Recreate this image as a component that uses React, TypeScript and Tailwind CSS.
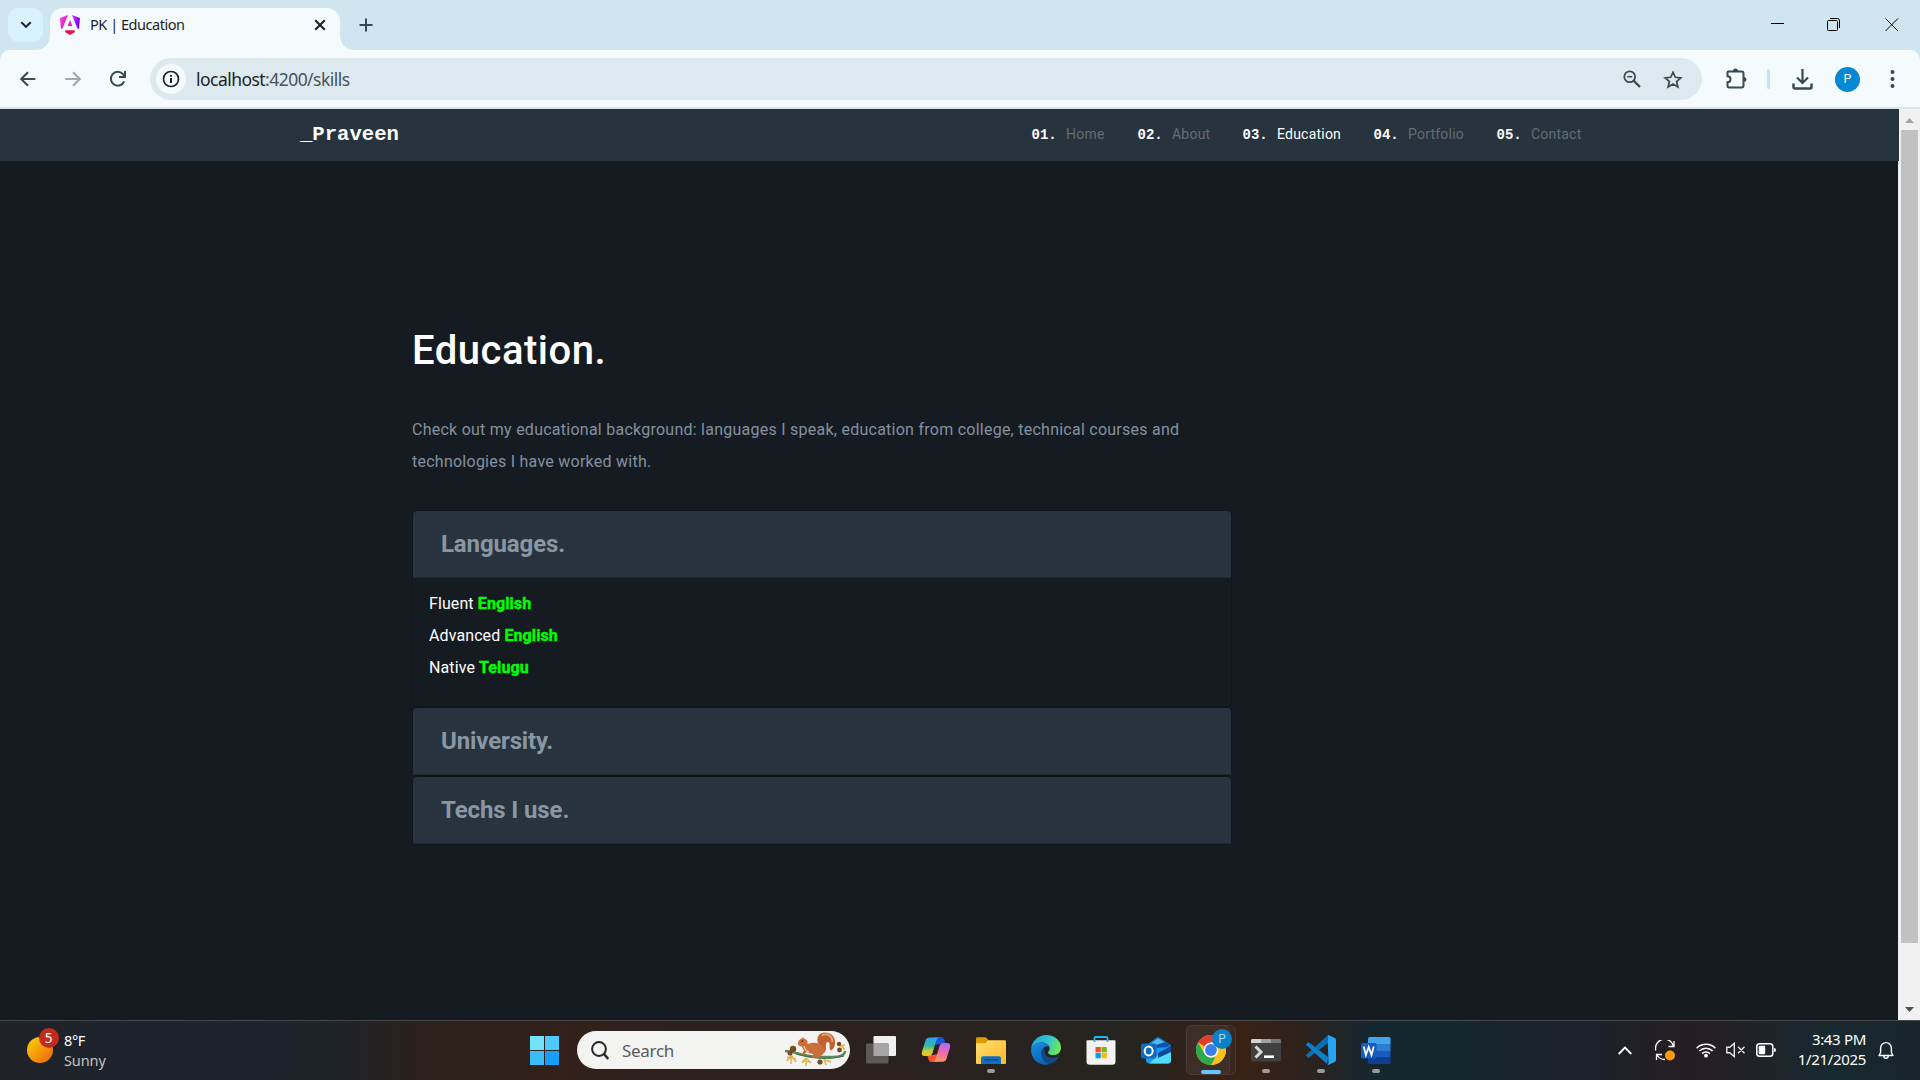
import React from "react";

const ui = "font-['Noto_Sans','Open_Sans',sans-serif]";

function AngularLogo() {
  return (
    <svg width="20" height="20" viewBox="0 0 20 20">
      <defs>
        <linearGradient id="ngA" x1="0" y1="0" x2="1" y2="1">
          <stop offset="0" stopColor="#ff41f8" />
          <stop offset="1" stopColor="#e4118f" />
        </linearGradient>
        <linearGradient id="ngB" x1="0" y1="0" x2="1" y2="1">
          <stop offset="0" stopColor="#f637e3" />
          <stop offset="0.5" stopColor="#8514f5" />
          <stop offset="1" stopColor="#7702ff" />
        </linearGradient>
      </defs>
      <path d="M0 2.9 8 0 2.6 13.2 1 14z" fill="url(#ngA)" />
      <path d="M12 0l8 2.9-1 11.1-1.6-.8z" fill="url(#ngB)" />
      <path d="M10 5l2.3 6H7.7z" fill="#ee1a9a" />
      <path d="M5.6 15.2h8.8l.6 1.8-5 3-5-3z" fill="#f0104a" />
    </svg>
  );
}

function TabStrip() {
  return (
    <div className="flex h-[50px] items-end bg-[#cfe6f0]">
      <div className="mb-2 ml-2 flex h-[34px] w-[35px] items-center justify-center rounded-[11px] bg-[#d8f2fd]">
        <svg width="12" height="8" viewBox="0 0 12 8" fill="none" stroke="#1c2327" strokeWidth="2.1">
          <path d="M1.3 1.3 6 5.9l4.7-4.6" />
        </svg>
      </div>
      <svg className="ml-[-8px]" width="15" height="15" viewBox="0 0 15 15">
        <path d="M15 0v15H0C9 15 15 9 15 0z" fill="#f5fafd" />
      </svg>
      <div className="flex h-[42px] w-[290px] items-center rounded-t-[13px] bg-[#f5fafd] pb-[8px] pl-[10px]">
        <AngularLogo />
        <span className={`${ui} ml-[10px] w-[216px] text-[14.5px] tracking-[-0.46px] text-[#1c2327]`}>PK | Education</span>
        <svg className="ml-[8px]" width="12" height="12" viewBox="0 0 12 12" stroke="#1c2327" strokeWidth="2.1">
          <path d="M1.2 1.2l9.6 9.6M10.800 1.200l-9.600 9.600" />
        </svg>
      </div>
      <svg width="15" height="15" viewBox="0 0 15 15">
        <path d="M0 0v15h15C6 15 0 9 0 0z" fill="#f5fafd" />
      </svg>
      <svg className="mb-[18px] ml-1" width="14" height="14" viewBox="0 0 14 14" stroke="#344b55" strokeWidth="2">
        <path d="M7 .5v13M.5 7h13" />
      </svg>
      <div className="mb-[18px] ml-auto flex items-center">
        <svg width="13" height="14" viewBox="0 0 13 14" stroke="#000" strokeWidth="1">
          <path d="M0 5.500h13" />
        </svg>
        <svg className="ml-[43px]" width="14" height="14" viewBox="0 0 14 14" fill="none" stroke="#000">
          <rect x=".5" y="2.500" width="10" height="10" rx="1" />
          <path d="M3 .5h7.500a2 2 0 0 1 2 2V10" />
        </svg>
        <svg className="ml-[44px] mr-[21px]" width="14" height="14" viewBox="0 0 14 14" stroke="#000" strokeWidth="1">
          <path d="M.5.500l12.500 12.500M13 .5.500 13" />
        </svg>
      </div>
    </div>
  );
}

function Toolbar() {
  return (
    <div className="bg-[#cfe6f0]">
      <div className="flex h-[59px] items-start rounded-t-[10px] border-b-2 border-[#dae5e9] bg-[#f5fafd] pt-2">
        <div className="flex h-[42px] w-[150px] items-center pl-5">
          <svg width="16" height="16" viewBox="0 0 16 16" fill="none" stroke="#344b55" strokeWidth="2">
            <path d="M15.300 8H1.800M8 1.200 1.200 8 8 14.800" />
          </svg>
          <svg className="ml-[29px]" width="16" height="16" viewBox="0 0 16 16" fill="none" stroke="#9fa8ad" strokeWidth="2">
            <path d="M.3 8h13.900M8 1.200 14.800 8 8 14.800" />
          </svg>
          <svg className="ml-[28px]" width="18" height="18" viewBox="0 0 18 18" fill="none" stroke="#344b55" strokeWidth="2">
            <path d="M15.200 11.300A6.900 6.900 0 1 1 13.900 4.100L15.500 6" />
            <path d="M16 1v6h-6" />
          </svg>
        </div>
        <div className="flex h-[42px] w-[1552px] items-center rounded-full bg-[#dceaef] pl-[6px]">
          <div className="flex size-[30px] items-center justify-center rounded-full bg-[#f5fafd]">
            <svg width="18" height="18" viewBox="0 0 18 18" fill="none" stroke="#1c2327" strokeWidth="1.700">
              <circle cx="9" cy="9" r="7.500" />
              <path d="M9 8v5M9 5v1.800" strokeWidth="2" />
            </svg>
          </div>
          <span className={`${ui} ml-[10px] text-[17.500px] tracking-[-0.540px] text-[#1c2327]`}>
            localhost<span className="text-[#4a5257]">:4200/skills</span>
          </span>
          <svg className="ml-auto" width="18" height="18" viewBox="0 0 18 18" fill="none" stroke="#41484c" strokeWidth="1.800">
            <circle cx="6.700" cy="6.700" r="5.400" />
            <path d="M10.600 10.600 17 17" strokeWidth="2.200" />
            <path d="M4.200 6.700h5" strokeWidth="1.500" />
          </svg>
          <svg className="ml-[22px] mr-[19px]" width="20" height="19" viewBox="0 0 20 19" fill="none" stroke="#41484c" strokeWidth="1.700">
            <path d="M10 2.200l2.300 5.100 5.500.5-4.200 3.700 1.300 5.500-4.900-2.900-4.900 2.900 1.300-5.500L2.200 7.800l5.500-.5z" />
          </svg>
        </div>
        <div className="flex h-[42px] flex-1 items-center pl-6">
          <svg width="21" height="22" viewBox="0 0 21 22">
            <path d="M2.500 3.500h13.300q1.700 0 1.700 1.700v12.600q0 1.700-1.700 1.700H3.200q-1.700 0-1.700-1.700v-3.600c4 0 4-6 0-6V4.500q0-1 1-1z" fill="none" stroke="#344b55" strokeWidth="2" />
            <path d="M7 3a2.500 2.500 0 0 1 5 0zM18 9a2.500 2.500 0 0 1 0 5z" fill="#344b55" />
          </svg>
          <div className="ml-[20px] h-5 w-[3px] rounded bg-[#b6eaff]" />
          <svg className="ml-[22px]" width="21" height="21" viewBox="0 0 21 21" fill="none" stroke="#344b55" strokeWidth="2.200">
            <path d="M10.500 0v13M5 8.500l5.500 5.500L16 8.500" />
            <path d="M1.500 14.500v3.500q0 1.500 1.500 1.500h15q1.500 0 1.500-1.500v-3.500" strokeWidth="2.500" />
          </svg>
          <div className="ml-[22px] flex size-[25px] items-center justify-center rounded-full bg-[#0488d1] font-[Roboto] text-[12.500px] text-white">P</div>
          <svg className="ml-[30px]" width="5" height="18" viewBox="0 0 5 18" fill="#344b55">
            <circle cx="2.500" cy="2" r="2" />
            <circle cx="2.500" cy="9" r="2" />
            <circle cx="2.500" cy="16" r="2" />
          </svg>
        </div>
      </div>
    </div>
  );
}

function NavLink({ n, label, cls, active }: { n: string; label: string; cls: string; active?: boolean }) {
  return (
    <div className={`flex items-baseline ${cls}`}>
      <span className="w-[35px] pl-[0.500px] font-['Liberation_Mono',monospace] text-[14px] font-bold text-white">{n}</span>
      <span className={active ? "text-[14px] tracking-[0.220px] text-white" : "text-[14px] tracking-[0.220px] text-[#626c75]"}>{label}</span>
    </div>
  );
}

function Card({ title, children }: { title: string; children?: React.ReactNode }) {
  return (
    <div className="rounded-[5px] border border-[#11161a]">
      <div className="flex h-[67px] items-center rounded-t-[4px] border-b border-[#1f2931] bg-[#27333e] pl-[28px] text-[24px] font-bold tracking-[-0.120px] text-[#8a97a3]">
        {title}
      </div>
      {children}
    </div>
  );
}

function Lang({ level, name }: { level: string; name: string }) {
  return (
    <p className="text-base leading-8 tracking-[0.100px] text-white">
      {level} <b className="tracking-[0.100px] text-[#00ff00] [-webkit-text-stroke:0.400px_#00ff00]">{name}</b>
    </p>
  );
}

function Page() {
  return (
    <div className="flex h-[911px] bg-[#f1f1f1] font-[Roboto,sans-serif]">
      <div className="w-[1899px]">
        <nav className="flex h-[52px] items-center bg-[#27333e] pl-[300px]">
          <span className="w-[731px] pt-px font-['Liberation_Mono',monospace] text-[20.600px] font-bold text-white">_Praveen</span>
          <NavLink n="01." label="Home" cls="w-[106px]" />
          <NavLink n="02." label="About" cls="w-[105px]" />
          <NavLink n="03." label="Education" cls="w-[131px]" active />
          <NavLink n="04." label="Portfolio" cls="w-[123px]" />
          <NavLink n="05." label="Contact" cls="w-[90px]" />
        </nav>
        <main className="mr-px h-[859px] bg-[#161b22] pl-[412px] pt-[166px]">
          <h1 className="text-[40px] font-medium leading-[48px] tracking-[0.500px] text-white">Education.</h1>
          <p className="mt-[39px] w-[820px] text-base leading-8 tracking-[0.250px] text-[#8391a0]">
            Check out my educational background: languages I speak, education from college, technical courses and
            <br />
            technologies I have worked with.
          </p>
          <div className="mt-[32px] flex w-[820px] flex-col">
            <Card title="Languages.">
              <div className="h-[128px] pl-4 pt-[10px]">
                <Lang level="Fluent" name="English" />
                <Lang level="Advanced" name="English" />
                <Lang level="Native" name="Telugu" />
              </div>
            </Card>
            <Card title="University." />
            <Card title="Techs I use." />
          </div>
        </main>
      </div>
      <div className="flex w-[21px] flex-col items-center">
        <svg className="mt-[9px]" width="9" height="5" viewBox="0 0 9 5" fill="#a3a3a3">
          <path d="M4.500 0 9 5H0z" />
        </svg>
        <div className="mt-[7px] h-[813px] w-[17px] bg-[#c1c1c1]" />
        <svg className="mt-[64px]" width="9" height="5" viewBox="0 0 9 5" fill="#505050">
          <path d="M0 0h9L4.500 5z" />
        </svg>
      </div>
    </div>
  );
}

function Squirrel() {
  return (
    <svg width="64" height="36" viewBox="0 0 64 36">
      <path d="M1 19c10 0 18 6 34 6 14 0 26 1 26-6" fill="none" stroke="#5d8a5b" strokeWidth="2.500" />
      <path d="M12 22c18 5 34 6 48 2" fill="none" stroke="#3f6d47" strokeWidth="1" />
      <g fill="none" stroke="#dfb44a" strokeWidth="1.500">
        <path d="M7 23l-4 6M7 23v9M7 23l5 7M3 25l9 2" />
        <path d="M22 26l-4 5M22 26v8M22 26l5 5M18 29l9 1" />
        <path d="M40 27l2 6M41 28l6 2M57 13l4 5M56 14l5-1" />
      </g>
      <g fill="#7a4b22">
        <circle cx="9" cy="17" r="3.200" />
        <circle cx="6" cy="21" r="2.500" />
        <circle cx="36" cy="30" r="2.600" />
        <circle cx="55" cy="12" r="2.200" />
        <circle cx="55.500" cy="18" r="2.400" />
      </g>
      <path d="M35 13c-4-7 0-12.500 6-12.500 7 0 11 5.500 10 11.500-.6 3.500-2.500 6-4.500 6.500-2-3 .5-8-2.500-8.500-2.500-.3-2 3-2 6 0 4-3 7-7 7z" fill="#c2632f" />
      <path d="M38 3.500c5-3 10 0 10.500 6.500" fill="none" stroke="#e5a273" strokeWidth="2" />
      <path d="M14 10.500c.5-2 2-3.500 4-4L18.500 5l2 1.700c2.500.8 3.500 3 3 5.300 6-2 11-2 14.500 1.500 4 4 2 10-3 11h1.500v1H28l1-3.500c-3-.5-5-1-6-2.500l-2.500 3-3 .5 2.500-4.500c-1.500-2-1.500-3.500-2.500-4-1.500 0-3.500-1-3.500-2.500z" fill="#cb6f3a" />
      <path d="M20 14c.5 3 2 5 5 6" fill="none" stroke="#efc6a2" strokeWidth="1.500" />
      <circle cx="18.300" cy="9.200" r=".8" fill="#2b1208" />
    </svg>
  );
}

function Copilot() {
  return (
    <svg width="30" height="28" viewBox="0 0 30 28">
      <defs>
        <linearGradient id="cpA" x1="0" y1="0" x2="0" y2="1">
          <stop offset="0" stopColor="#2aa4f4" />
          <stop offset="0.450" stopColor="#37b7a0" />
          <stop offset="0.750" stopColor="#c3d236" />
          <stop offset="1" stopColor="#ffb52e" />
        </linearGradient>
        <linearGradient id="cpB" x1="0.500" y1="0" x2="0.300" y2="1">
          <stop offset="0" stopColor="#b26af5" />
          <stop offset="0.500" stopColor="#ef6aa6" />
          <stop offset="1" stopColor="#ff9a63" />
        </linearGradient>
      </defs>
      <path d="M13 1h7q2.500 0 3.300 2.500L24.500 8H19l-5 1z" fill="#1c54d8" />
      <path d="M17 26h-6.500q-2.500 0-3-2.500L6.200 19H12l5-1z" fill="#f2542d" />
      <path d="M8.500 1.500H18q-2 .5-3 4L11.500 17q-1 3-4 3H3.500Q0 20 1 15.500L4.500 4.500Q5.500 1.500 8.500 1.500z" fill="url(#cpA)" />
      <path d="M21.500 25.800H12q2-.5 3-4L18.500 10q1-3 4-3h4q3.500 0 2.500 4.500L25.500 22.800q-1 3-4 3z" fill="url(#cpB)" />
    </svg>
  );
}

function Explorer() {
  return (
    <svg width="30" height="27" viewBox="0 0 30 27">
      <defs>
        <linearGradient id="exA" x1="0" y1="0" x2="1" y2="1">
          <stop offset="0" stopColor="#ffdf71" />
          <stop offset="1" stopColor="#fdb924" />
        </linearGradient>
      </defs>
      <path d="M0 1.500Q0 .3 1.200.3H9q1 0 1.600.7L12.500 3.300V8H0z" fill="#dc9b05" />
      <path d="M0 6.300h9.500l2.500-3h16.800q1.200 0 1.200 1.200V26q0 .9-1 .9H1q-1 0-1-1z" fill="url(#exA)" />
      <path d="M5 26.900V21q0-1.800 1.800-1.800h16.400Q25 19.200 25 21v5.900z" fill="#0f6fc0" />
      <path d="M8 22.800h14" stroke="#0a3f7c" strokeWidth="1.200" />
    </svg>
  );
}

function Edge() {
  return (
    <svg width="30" height="30" viewBox="0 0 30 30">
      <defs>
        <linearGradient id="edA" x1="0" y1="0.200" x2="1" y2="0.500">
          <stop offset="0" stopColor="#1f9fe0" />
          <stop offset="0.550" stopColor="#32c3cf" />
          <stop offset="1" stopColor="#6eea52" />
        </linearGradient>
        <linearGradient id="edB" x1="0" y1="0" x2="0.500" y2="1">
          <stop offset="0" stopColor="#1a8fe0" />
          <stop offset="1" stopColor="#0c62b8" />
        </linearGradient>
      </defs>
      <path d="M0 14C1 5 8 0 15 0c9 0 15 6 15 12.500 0 5-3.500 7.500-7.500 7.500-3.500 0-5.500-1.300-5.500-2.600 0-.9 1.600-1.400 1.600-4C18.600 10 15 7.500 10.500 7.500 5 7.500 1.500 11 0 14z" fill="url(#edA)" />
      <path d="M0 14.500C1.500 10 6 7.500 10.500 7.500c4.500 0 7 2 7.700 4-4.500-1-7.700 2.500-7.700 6.500C10.500 24 15 28 19 29 9 32 0 25 0 14.500z" fill="url(#edB)" />
      <path d="M13.500 12.500C10 14 9.500 20 12 23.500 14.500 27.500 18 29 19 29c4-1.300 7-4 8.500-6.500.4-.8-.2-1.200-1-.8-6 3-15 .3-13-9.200z" fill="#114a8b" />
    </svg>
  );
}

function Store() {
  return (
    <svg width="30" height="29" viewBox="0 0 30 29">
      <path d="M.5 5q0-.8.8-.8h27.400q.8 0 .8.800v20.500q0 3.300-3.300 3.300H3.800Q.5 28.800.5 25.500z" fill="#f2f2f2" />
      <path d="M8.500 6V2q0-1 1-1h11q1 0 1 1v4" fill="none" stroke="#28b2ec" strokeWidth="1.800" />
      <path d="M9.500 11h5.300v5.300H9.500z" fill="#f25022" />
      <path d="M15.500 11h5.300v5.300h-5.300z" fill="#7fba00" />
      <path d="M9.500 17h5.300v5.300H9.500z" fill="#00a4ef" />
      <path d="M15.500 17h5.300v5.300h-5.300z" fill="#ffb900" />
    </svg>
  );
}

function Outlook() {
  return (
    <svg width="30" height="27" viewBox="0 0 30 27">
      <path d="M5 8.500 15.500.8q1.500-1 3 0L29 7.500q1 .8 1 2V12H5z" fill="#1583d8" />
      <path d="M10 6.500 17 1.500l8.500 5-9 6z" fill="#54b9f0" />
      <path d="M15 8l9-3 5 3-12 8z" fill="#0b53b0" />
      <path d="M5 11h8l17-1v13q0 3.500-3.500 3.500h-18Q5 26.500 5 23z" fill="#1a9cec" />
      <path d="M17 18l13-7v12q0 3.500-3.500 3.500h-18z" fill="#4fdcfa" />
      <path d="M30 9v6l-13 6v-5z" fill="#0d49a0" />
      <rect x="0" y="6.500" width="15.500" height="15" rx="2" fill="#0f6cbd" />
      <ellipse cx="7.700" cy="14" rx="4" ry="4.500" fill="none" stroke="#fff" strokeWidth="2" />
    </svg>
  );
}

function Chrome() {
  return (
    <svg width="30" height="30" viewBox="0 0 30 30">
      <circle cx="15" cy="15" r="15" fill="#fbc116" />
      <path d="M15 15 2 7.500A15 15 0 0 1 28 7.500H15z" fill="#e33b2e" />
      <path d="M2 7.500 8.500 18.750Q11 22.500 15 22.500h6.500L15 30A15 15 0 0 1 2 7.500z" fill="#2da94f" />
      <path d="M21.500 18.750 15 30A15 15 0 0 0 28 7.500H15z" fill="#fbc116" />
      <circle cx="15" cy="15" r="7.500" fill="#fff" />
      <circle cx="15" cy="15" r="5.900" fill="#3b7ded" />
    </svg>
  );
}

function Terminal() {
  return (
    <svg width="30" height="23" viewBox="0 0 30 23">
      <rect width="30" height="22.500" rx="1.500" fill="#404040" />
      <path d="M0 4V1.500Q0 0 1.500 0h27Q30 0 30 1.500V4z" fill="#777" />
      <path d="M0 1.500Q0 0 1.500 0H10v4H0z" fill="#d2d2d2" />
      <path d="M10 0h10v4H10z" fill="#a2a2a2" />
      <path d="M4.500 7.500 10 13l-5.500 5.500" fill="none" stroke="#d8d8d8" strokeWidth="3" />
      <path d="M13 17.700h10" stroke="#fff" strokeWidth="2.600" />
    </svg>
  );
}

function VsCode() {
  return (
    <svg width="30" height="30" viewBox="0 0 30 30">
      <path d="M22 8 3 22.500q-.6.500-1.200 0L.4 21q-.5-.6 0-1.200L21 1z" fill="#0a6db5" />
      <path d="M22 22 3 7.500q-.6-.5-1.200 0L.4 9q-.5.600 0 1.200L21 29z" fill="#0c80cc" />
      <path d="M21.500.3q.6-.4 1.300-.1l6 2.700q1.200.6 1.200 2v20.200q0 1.400-1.200 2l-6 2.700q-.7.300-1.300-.1L22.500 28z" fill="#27a5f0" />
    </svg>
  );
}

function Word() {
  return (
    <svg width="30" height="27" viewBox="0 0 30 27">
      <path d="M7 1.500Q7 0 8.500 0h19.500Q29.500 0 29.500 1.500V7H7z" fill="#41a5ee" />
      <path d="M7 7h22.500v7H7z" fill="#2b7cd3" />
      <path d="M7 14h22.500v6.500H7z" fill="#185abd" />
      <path d="M7 20.500h22.500v5q0 1.500-1.500 1.500H8.500Q7 27 7 25.500z" fill="#103f91" />
      <rect x="0" y="6" width="15.500" height="15.500" rx="1.500" fill="#185abd" />
      <path d="M2.700 9.500l2.200 8.500 2.800-8 2.800 8 2.200-8.500" fill="none" stroke="#fff" strokeWidth="1.800" />
    </svg>
  );
}

function TaskItem({ children, dot }: { children: React.ReactNode; dot?: boolean }) {
  return (
    <div className="flex h-[52px] w-[55px] flex-col items-center pt-[11px]">
      <div className="flex h-[30px] items-center">{children}</div>
      <div className={dot ? "mt-[4px] h-[4px] w-[8px] rounded-full bg-[#9b9b9b]" : "hidden"} />
    </div>
  );
}

function Taskbar() {
  return (
    <div className={`${ui} flex h-[60px] items-start border-t border-[#48484a] bg-[linear-gradient(90deg,#202327_0,#1d222d_160px,#1f2329_330px,#2c201b_430px,#33211a_560px,#2c2120_700px,#2a211f_900px,#25241f_1130px,#3a2116_1240px,#2f221c_1300px,#15272e_1370px,#14272e_1450px,#1c212b_1580px,#251e22_1700px,#182930_1830px,#18262c_1920px)]`}>
      <div className="flex w-[530px] items-start pl-[27px] pt-[7px]">
        <div className="relative h-[36px] w-[32px]">
          <div className="mt-[9px] size-[25.500px] rounded-full bg-linear-to-br from-[#fdd306] to-[#e85f0c]" />
          <div className="absolute left-[11.500px] top-0 flex size-[20px] items-center justify-center rounded-full bg-[#c42b1c] text-[13.500px] text-white">5</div>
        </div>
        <div className="ml-[5px] mt-[2px] text-[14.500px] leading-5">
          <p className="tracking-[-0.400px] text-white">8°F</p>
          <p className="tracking-[-0.100px] text-[#c3c3c3]">Sunny</p>
        </div>
      </div>
      <div className="mt-[15px] grid grid-cols-2 gap-px">
        <div className="size-[14px] bg-[#72e3fd]" />
        <div className="size-[14px] bg-[#4fcafc]" />
        <div className="size-[14px] bg-[#3cbdfb]" />
        <div className="size-[14px] bg-[#169efb]" />
      </div>
      <div className="ml-[18px] mt-[10px] flex h-[38px] w-[273px] items-center rounded-full bg-[#f3f3f2] pl-[14px] pr-[2px]">
        <svg width="18" height="19" viewBox="0 0 18 19" fill="none" stroke="#262626" strokeWidth="2">
          <circle cx="8" cy="8" r="6.900" />
          <path d="M12.800 12.800l4.500 5.200" strokeWidth="2.500" />
        </svg>
        <span className="ml-[13px] mt-[2px] text-[17px] tracking-[-0.300px] text-[#5b5b5b]">Search</span>
        <div className="ml-auto">
          <Squirrel />
        </div>
      </div>
      <svg className="ml-[16px] mt-[15px]" width="30" height="28" viewBox="0 0 30 28">
        <rect x="7.500" width="22.500" height="20" rx="1" fill="#efefef" />
        <rect y="7.500" width="22.500" height="20" rx="1" fill="#5c5857" />
        <path d="M7.500 7.500h15V20h-15z" fill="#a7a5a5" />
      </svg>
      <div className="ml-[12px] flex pt-[3px]">
        <TaskItem><Copilot /></TaskItem>
        <TaskItem dot><Explorer /></TaskItem>
        <TaskItem><Edge /></TaskItem>
        <TaskItem><Store /></TaskItem>
        <TaskItem><Outlook /></TaskItem>
        <div className="relative mt-px flex h-[50px] w-[55px] flex-col items-center pt-[10px]">
          <div className="absolute left-[3px] top-0 h-[50px] w-[50px] rounded-[6px] border border-[#4c372f] bg-[#3a2720]" />
          <div className="absolute left-[3px] top-0 h-[50px] w-[44px] rounded-[6px] border border-[#4c3b34] bg-[#3d2e28]" />
          <div className="relative"><Chrome /></div>
          <div className="absolute left-[29px] top-[4px] flex size-[20px] items-center justify-center rounded-full bg-[#0a80c6] font-[Roboto] text-[12px] text-[#a8dafa]">P</div>
          <div className="relative mt-[5px] h-[4px] w-[20px] rounded-full bg-[#60c8fc]" />
        </div>
        <TaskItem dot><Terminal /></TaskItem>
        <TaskItem dot><VsCode /></TaskItem>
        <TaskItem dot><Word /></TaskItem>
      </div>
      <div className="ml-auto flex h-[58px] items-center pr-[26px]">
        <svg width="14" height="9" viewBox="0 0 14 9" fill="none" stroke="#fff" strokeWidth="1.800">
          <path d="M.7 8 7 1.500 13.300 8" />
        </svg>
        <svg className="ml-[23px]" width="21" height="21" viewBox="0 0 21 21" fill="none" stroke="#fff" strokeWidth="1.300">
          <path d="M.8 10.500A9 9 0 0 1 18.500 6M19 1v5.500h-5.500M10 19.500A9 9 0 0 1 2 15M1.500 20v-5.500H7" />
          <circle cx="15" cy="15.500" r="5" fill="#ff9a0a" stroke="none" />
        </svg>
        <svg className="ml-[20px]" width="20" height="16" viewBox="0 0 20 16" fill="none" stroke="#fff" strokeWidth="1.500">
          <path d="M.6 6.200a13.200 13.200 0 0 1 18.800 0M3.400 9a9.300 9.300 0 0 1 13.200 0M6.100 11.600a5.500 5.500 0 0 1 7.800 0" />
          <circle cx="10" cy="13.700" r="1.900" fill="#fff" stroke="none" />
        </svg>
        <svg className="ml-[10px]" width="20" height="16" viewBox="0 0 20 16" fill="none" stroke="#e8e8e8" strokeWidth="1.400">
          <path d="M.8 5.200h3L8.300 1.300v13.400L3.800 10.800h-3zM12 4.800l6.500 6.500M18.500 4.800 12 11.300" />
        </svg>
        <svg className="ml-[10px]" width="20" height="14" viewBox="0 0 20 14">
          <rect x=".8" y=".8" width="16" height="12.400" rx="2.800" fill="none" stroke="#fff" strokeWidth="1.500" />
          <rect x="2.700" y="2.700" width="6.500" height="8.600" rx="1" fill="#fff" />
          <path d="M18 5q2 0 2 2t-2 2z" fill="#fff" />
        </svg>
        <div className="ml-[19px] mt-[-2px] w-[71px] whitespace-nowrap text-right text-[15px] leading-5 tracking-[-0.320px] text-white">
          <p>3:43 PM</p>
          <p>1/21/2025</p>
        </div>
        <svg className="ml-[12px]" width="16" height="19" viewBox="0 0 16 19" fill="none" stroke="#fff" strokeWidth="1.400">
          <path d="M2.600 11.500V7a5.400 5.400 0 0 1 10.800 0v4.500l1.600 3H1zM5.800 15a2.200 2.200 0 0 0 4.400 0" strokeLinejoin="round" />
        </svg>
      </div>
    </div>
  );
}

export default function App() {
  return (
    <div className="h-[1080px] w-[1920px] overflow-hidden bg-[#20242a]">
      <TabStrip />
      <Toolbar />
      <Page />
      <Taskbar />
    </div>
  );
}
